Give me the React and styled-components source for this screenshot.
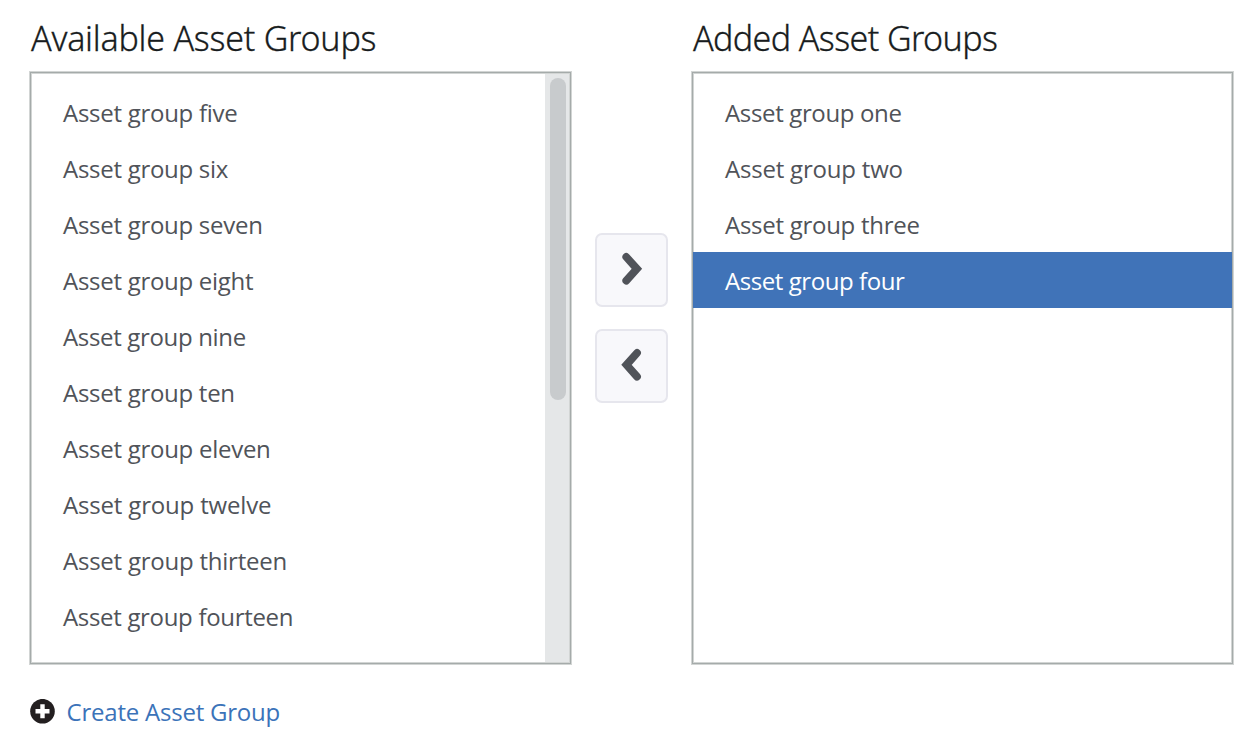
import React from "react";
import styled, { createGlobalStyle } from "styled-components";

const GlobalStyle = createGlobalStyle`
  * { box-sizing: border-box; }
  body { margin: 0; background: #fff; font-family: "Open Sans", sans-serif; }
`;

const Page = styled.main`
  width: 1260px;
  height: 752px;
  padding: 13px 0 0 29px;
`;

const Transfer = styled.div`
  display: grid;
  grid-template-columns: 543px 75px 543px;
  column-gap: 22px;
`;

const Panel = styled.section`
  display: flex;
  flex-direction: column;
`;

const Title = styled.h2`
  margin: 0;
  height: 59px;
  padding-left: 2px;
  font: 300 34px/50px "Noto Sans", sans-serif;
  letter-spacing: ${(p) => p.$tracking}px;
  color: #181c20;
  -webkit-text-stroke: 0.3px #181c20;
  white-space: nowrap;
`;

const ListFrame = styled.div`
  display: flex;
  height: 592px;
  margin: 0 1px;
  border: 1px solid #a5abaa;
  box-shadow: 0 0 0 1px #d2d5d4, inset 0 0 0 1px #d2d5d4;
`;

const List = styled.ul`
  flex: 1;
  margin: 0;
  padding: 11px 0 0;
  list-style: none;
`;

const Item = styled.li`
  height: 56px;
  padding-left: 32px;
  font-size: 24px;
  line-height: 58px;
  letter-spacing: ${(p) => p.$tracking}px;
  white-space: nowrap;
  color: ${(p) => (p.$selected ? "#fff" : "#505359")};
  background: ${(p) => (p.$selected ? "#4073b8" : "transparent")};
`;

const ScrollTrack = styled.div`
  width: 24.5px;
  margin: 1px 1px 1px 0;
  padding: 4px 3.5px 0 5px;
  background: #e5e7e8;
`;

const ScrollThumb = styled.div`
  height: 322px;
  border-radius: 8px;
  background: #c8cbcd;
`;

const Controls = styled.div`
  display: flex;
  flex-direction: column;
  gap: 22px;
  padding: 220px 0 0 1px;
`;

const MoveButton = styled.button`
  display: flex;
  width: 73px;
  height: 74px;
  padding: 0;
  border: 2px solid #e6e6ed;
  border-radius: 7px;
  background: #f8f8fb;
`;

const ChevronIcon = styled.svg`
  flex: none;
  fill: none;
  stroke: #505359;
  stroke-width: 7.8px;
  stroke-linecap: round;
`;

const CreateLink = styled.a`
  display: flex;
  align-items: center;
  height: 34px;
  margin-top: 31px;
  gap: 10.6px;
  font-size: 24px;
  line-height: 34px;
  letter-spacing: -0.22px;
  color: #3b73b9;
`;

const available = [
  ["Asset group five", -0.27],
  ["Asset group six", -0.28],
  ["Asset group seven", -0.28],
  ["Asset group eight", -0.28],
  ["Asset group nine", -0.34],
  ["Asset group ten", -0.28],
  ["Asset group eleven", -0.27],
  ["Asset group twelve", -0.17],
  ["Asset group thirteen", -0.23],
  ["Asset group fourteen", -0.32],
];

const added = [
  ["Asset group one", -0.35],
  ["Asset group two", -0.2],
  ["Asset group three", -0.27],
  ["Asset group four", -0.43],
];

function Chevron({ d }) {
  return (
    <ChevronIcon width="69" height="70" viewBox="0 0 69 70">
      <path d={d} />
    </ChevronIcon>
  );
}

function AssetList({ title, tracking, items, selected, scrollable }) {
  return (
    <Panel>
      <Title $tracking={tracking}>{title}</Title>
      <ListFrame>
        <List>
          {items.map(([name, itemTracking]) => (
            <Item key={name} $tracking={itemTracking} $selected={name === selected}>
              {name}
            </Item>
          ))}
        </List>
        {scrollable && (
          <ScrollTrack>
            <ScrollThumb />
          </ScrollTrack>
        )}
      </ListFrame>
    </Panel>
  );
}

export default function App() {
  return (
    <Page>
      <GlobalStyle />
      <Transfer>
        <AssetList title="Available Asset Groups" tracking={-0.24} items={available} scrollable />
        <Controls>
          <MoveButton aria-label="Add">
            <Chevron d="M29.3 22 L39.9 33.8 L29.3 45.6" />
          </MoveButton>
          <MoveButton aria-label="Remove">
            <Chevron d="M40 22 L29.5 33.8 L40 45.6" />
          </MoveButton>
        </Controls>
        <AssetList title="Added Asset Groups" tracking={-0.6} items={added} selected="Asset group four" />
      </Transfer>
      <CreateLink>
        <svg width="27" height="27" viewBox="0 0 27 27">
          <circle cx="13.5" cy="12.2" r="12.3" fill="#231f20" />
          <path d="M13.5 5.2v14M6.5 12.2h14" stroke="#fff" strokeWidth="4.4" />
        </svg>
        Create Asset Group
      </CreateLink>
    </Page>
  );
}
